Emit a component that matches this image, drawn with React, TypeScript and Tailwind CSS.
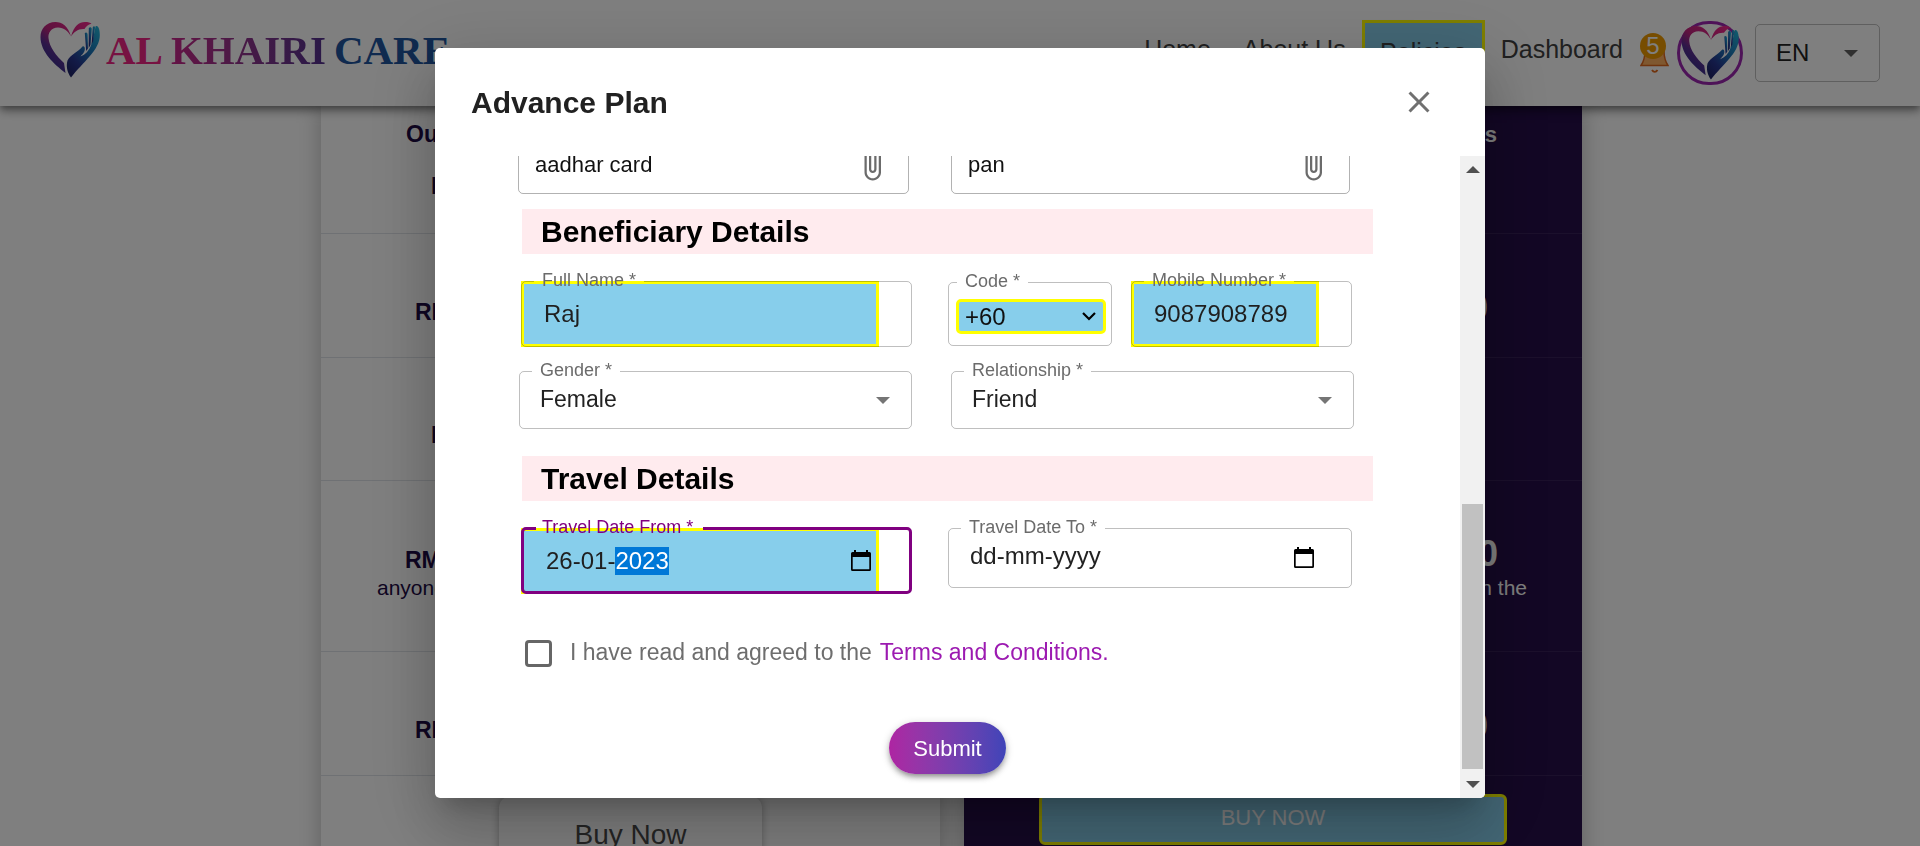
import { useEffect, useRef, type ReactNode } from "react";

function HeartLogo({ id, className }: { id: string; className: string }) {
  return (
    <svg viewBox="0 0 60 56" className={className} aria-hidden="true">
      <defs>
        <linearGradient id={`${id}-heart`} x1="0.9" y1="0" x2="0.15" y2="0.9">
          <stop offset="0" stopColor="#f0288c" />
          <stop offset="0.5" stopColor="#c0247e" />
          <stop offset="0.72" stopColor="#5a2f92" />
          <stop offset="1" stopColor="#2f2f8c" />
        </linearGradient>
        <linearGradient id={`${id}-hand`} x1="0.9" y1="0" x2="0.2" y2="1">
          <stop offset="0" stopColor="#22b2d8" />
          <stop offset="0.45" stopColor="#1b6fb4" />
          <stop offset="0.75" stopColor="#26358f" />
          <stop offset="1" stopColor="#1f2468" />
        </linearGradient>
      </defs>
      <path
        fill={`url(#${id}-heart)`}
        d="M31 14.500C34 4 39 0 45 0c3 0 5.500.700 6.500 1.700C48 2.500 46 4.500 44.500 7 38 6.500 34 10 31 14.500 28 9 24 5.500 18 5.500 11 5.500 8 11 8.500 16c.700 9 8 18 15.500 25l1.500 10C14 42 .500 30 .500 15 .500 7 6 0 15.500 0 22 0 28 4 31 14.500z"
      />
      <g fill={`url(#${id}-hand)`}>
        <path d="M31 55.500C27 50 26 44 27.500 38.500 31 32 37 31 42.500 24.500 44.500 23.500 45.500 26 44.500 29c-1 2.500-3 4-4 5.500 5-2 8.500-6 10.500-11 2-6 3.500-13 4.500-19C57.500 3 59.800 6 59.800 13 60 28 43 40 31 55.500z" />
        <path d="M44.800 11c1.200-1.200 2.800-.500 2.800 1.500l.400 14-1.800 2.500z" />
        <path d="M48.800 6c1-1.500 3-1 3 1L50.500 23l-1.800 3z" />
        <path d="M52.800 5c.800-1.400 2.400-1 2.200 1l-1.800 13-1.600 3z" />
      </g>
    </svg>
  );
}

function Arrow({ className }: { className: string }) {
  return (
    <svg viewBox="0 0 14 7" className={`pointer-events-none h-[7px] w-[14px] ${className}`} aria-hidden="true">
      <path d="M0 0h14L7 7z" fill="currentColor" />
    </svg>
  );
}

function Clip() {
  return (
    <svg viewBox="0 0 24 24" className="size-9 fill-[#6b6b6b]" aria-hidden="true">
      <path d="M16.500 6v11.500c0 2.210-1.790 4-4 4s-4-1.790-4-4V5c0-1.380 1.120-2.500 2.500-2.500s2.500 1.120 2.500 2.500v10.500c0 .550-.450 1-1 1s-1-.450-1-1V6H10v9.500c0 1.380 1.120 2.500 2.500 2.500s2.500-1.120 2.500-2.500V5c0-2.210-1.790-4-4-4S7 2.790 7 5v12.500c0 3.040 2.460 5.500 5.500 5.500s5.500-2.460 5.500-5.500V6h-1.500z" />
    </svg>
  );
}

function Calendar() {
  return (
    <svg viewBox="0 0 20 21" className="h-[21px] w-5" aria-hidden="true">
      <path d="M3 0h2v2h10V0h2v2h1.500A1.500 1.500 0 0 1 20 3.500v16a1.500 1.500 0 0 1-1.500 1.500h-17A1.500 1.500 0 0 1 0 19.500v-16A1.500 1.500 0 0 1 1.500 2H3zM1.700 7v12.300h16.600V7z" fillRule="evenodd" />
    </svg>
  );
}

type FieldProps = {
  id: string;
  label: string;
  height: string;
  labelLeft?: string;
  active?: boolean;
  children: ReactNode;
};

function Field({ id, label, height, labelLeft = "pl-3", active, children }: FieldProps) {
  return (
    <div className={`relative flex items-center ${height}`}>
      {children}
      <fieldset
        aria-hidden="true"
        className={`pointer-events-none absolute inset-x-0 -top-[9px] bottom-0 rounded-[5px] ${labelLeft} ${
          active ? "border-3 border-[#800080]" : "border border-black/25"
        }`}
      >
        <legend className="invisible h-[18px] px-2 text-lg leading-[18px]">{label}</legend>
      </fieldset>
      <label
        htmlFor={id}
        className={`absolute -top-2.5 left-px text-lg leading-[18px] whitespace-nowrap ${labelLeft} ${active ? "text-[#800080]" : "text-[#6b6b6b]"}`}
      >
        <span className="pl-2">{label}</span>
      </label>
    </div>
  );
}

const highlighted = "h-full min-w-0 flex-1 border-3 border-[#ffff00] bg-[#87ceeb] text-2xl text-[#1f1f1f] outline-none";

function SectionTitle({ children }: { children: ReactNode }) {
  return (
    <h3 className="mr-[87px] ml-[87px] flex h-[45px] items-center bg-[#ffebee] pl-[19px] text-[30px] leading-9 font-bold text-black">
      {children}
    </h3>
  );
}

function PlanForm() {
  const dateFrom = useRef<HTMLInputElement>(null);
  useEffect(() => {
    dateFrom.current?.focus({ preventScroll: true });
    dateFrom.current?.setSelectionRange(6, 10);
  }, []);

  return (
    <form className="flex shrink-0 flex-col pb-6" onSubmit={(e) => e.preventDefault()}>
      <div className="mb-[15px] grid grid-cols-[minmax(0,391fr)_minmax(0,399fr)] gap-[42px] pr-[110px] pl-[83px]">
        {["aadhar card", "pan"].map((name) => (
          <div key={name} className="flex h-[60px] items-center rounded-[5px] border border-black/30 pr-[18px] pl-4">
            <input aria-label="Document name" defaultValue={name} className="min-w-0 flex-1 text-[22px] text-[#111] outline-none" />
            <button type="button" aria-label="Attach file">
              <Clip />
            </button>
          </div>
        ))}
      </div>

      <SectionTitle>Beneficiary Details</SectionTitle>

      <div className="mt-[27px] grid grid-cols-[minmax(0,391fr)_minmax(0,404fr)] gap-9 pr-[108px] pl-[86px]">
        <Field id="name" label="Full Name *" height="h-[66px] pr-[33px]">
          <input id="name" defaultValue="Raj" className={`${highlighted} pl-5`} />
        </Field>
        <div className="grid grid-cols-[minmax(0,164fr)_minmax(0,221fr)] items-center gap-[19px]">
          <Field id="code" label="Code *" height="h-16 pt-1 pr-1.5 pl-2" labelLeft="pl-2">
            <select
              id="code"
              className="h-[35px] w-full appearance-none rounded-[5px] border-3 border-[#ffff00] bg-[#87ceeb] pl-1.5 text-2xl leading-[29px] text-[#111] outline-none"
            >
              <option>+60</option>
            </select>
            <svg viewBox="0 0 14 9" className="pointer-events-none absolute top-[30px] right-4 h-[9px] w-3.5" aria-hidden="true">
              <path d="M1 1l6 6 6-6" fill="none" stroke="#000" strokeWidth="2.2" />
            </svg>
          </Field>
          <Field id="mobile" label="Mobile Number *" height="h-[66px] pr-[33px]">
            <input id="mobile" defaultValue="9087908789" className={`${highlighted} pl-5`} />
          </Field>
        </div>
      </div>

      <div className="mt-6 grid grid-cols-[minmax(0,393fr)_minmax(0,403fr)] gap-[39px] pr-[106px] pl-[84px]">
        {[
          { id: "gender", label: "Gender *", value: "Female" },
          { id: "relationship", label: "Relationship *", value: "Friend" },
        ].map((f) => (
          <Field key={f.id} id={f.id} label={f.label} height="h-[58px]">
            <select id={f.id} className="h-full w-full appearance-none bg-transparent pb-0.5 pl-[21px] text-[23px] text-[#222] outline-none">
              <option>{f.value}</option>
            </select>
            <Arrow className="absolute top-[26px] right-[22px] text-[#757575]" />
          </Field>
        ))}
      </div>

      <div className="mt-[27px]">
        <SectionTitle>Travel Details</SectionTitle>
      </div>

      <div className="mt-[27px] grid grid-cols-[minmax(0,391fr)_minmax(0,404fr)] items-start gap-9 pr-[108px] pl-[86px]">
        <Field id="from" label="Travel Date From *" height="h-[66px] pr-[33px]" active>
          <input
            id="from"
            ref={dateFrom}
            defaultValue="26-01-2023"
            className={`${highlighted} pl-[22px] selection:bg-[#0078d7] selection:text-white`}
          />
          <button type="button" aria-label="Open calendar" className="absolute top-[22px] right-[41px]">
            <Calendar />
          </button>
        </Field>
        <Field id="to" label="Travel Date To *" height="h-[60px]">
          <input id="to" placeholder="dd-mm-yyyy" className="h-full w-full pb-1 pl-[22px] text-2xl outline-none placeholder:text-[#222]" />
          <button type="button" aria-label="Open calendar" className="absolute top-[19px] right-[38px]">
            <Calendar />
          </button>
        </Field>
      </div>

      <div className="mt-[46px] flex h-[27px] items-center pl-[90px] text-[23px] text-[#6e6e6e]">
        <input id="terms" type="checkbox" className="size-[27px] appearance-none rounded-[4px] border-3 border-[#666]" />
        <label htmlFor="terms" className="ml-[18px] pb-0.5">
          I have read and agreed to the
        </label>
        <a href="#terms" className="ml-2 pb-0.5 text-[#9c1ab1]">
          Terms and Conditions.
        </a>
      </div>

      <button
        type="submit"
        className="mt-[55px] ml-[454px] flex h-[52px] w-[117px] items-center justify-center rounded-full bg-linear-to-r from-[#ae24a2] to-[#3f44b8] text-[22px] text-white shadow-[0_4px_6px_-2px_rgba(0,0,0,0.4),0_2px_8px_rgba(0,0,0,0.2)]"
      >
        Submit
      </button>
    </form>
  );
}

function ScrollTrack() {
  return (
    <div className="flex w-[25px] shrink-0 flex-col items-center bg-[#f1f1f1] py-2.5 text-[#505050]" aria-hidden="true">
      <Arrow className="w-[11px] rotate-180" />
      <div className="mt-2.5 grow-[322]" />
      <div className="mb-3 w-[21px] grow-[265] bg-[#c1c1c1]" />
      <Arrow className="w-[11px]" />
    </div>
  );
}

function Header() {
  return (
    <header className="relative z-10 flex h-[106px] shrink-0 items-center bg-white pr-10 pl-10 shadow-[0_3px_6px_-1px_rgba(0,0,0,0.3),0_6px_8px_rgba(0,0,0,0.2),0_1px_15px_rgba(0,0,0,0.2)]">
      <a href="#home" className="flex items-center gap-1.5 pb-1.5 font-['Liberation_Serif',serif] text-[41px] leading-[52px] font-bold">
        <HeartLogo id="brand" className="h-14 w-[60px]" />
        <span className="flex gap-2">
          <span className="text-[#ee2484]">AL</span>
          <span className="bg-linear-to-r from-[#c8248a] to-[#52308e] bg-clip-text text-transparent">KHAIRI</span>
          <span className="text-[#20559e]">CARE</span>
        </span>
      </a>
      <nav className="ml-auto flex items-center text-[25px] text-[#404040]">
        <a href="#home" className="mr-8 pb-1.5">Home</a>
        <a href="#about" className="mr-4 pb-1.5">About Us</a>
        <a href="#policies" className="flex h-[66px] w-[123px] items-center justify-center border-3 border-[#ffff00] bg-[#87ceeb]">
          Policies
        </a>
        <a href="#dashboard" className="ml-4 pb-1.5">Dashboard</a>
      </nav>
      <button type="button" aria-label="Notifications" className="relative ml-[17px] h-10 w-[29px]">
        <svg viewBox="0 0 29 40" className="absolute inset-0 h-10 w-[29px]" aria-hidden="true">
          <path d="M1 32.500C4 28 5 25 5 18c0-6 4-10 9.500-10S24 12 24 18c0 7 1 10 4 14.500z" fill="#ffb060" stroke="#e0691c" strokeWidth="1.500" />
          <path d="M12 37c1.500 2.500 4 2.500 5.500 0" fill="none" stroke="#e0691c" strokeWidth="1.800" />
        </svg>
        <span className="absolute top-0 left-0 flex size-[26px] items-center justify-center rounded-full bg-[#ee9a00] text-2xl leading-6 text-white">
          5
        </span>
      </button>
      <a href="#profile" aria-label="Profile" className="ml-2 flex h-16 w-[66px] items-center justify-center rounded-full border-3 border-[#9c27b0]">
        <HeartLogo id="avatar" className="h-[54px] w-[58px]" />
      </a>
      <div className="relative ml-3 flex h-[58px] w-[125px] items-center">
        <select aria-label="Language" className="h-full w-full appearance-none rounded-[5px] border border-black/25 bg-transparent pl-5 text-2xl text-[#222]">
          <option>EN</option>
        </select>
        <Arrow className="absolute right-[22px] text-[#606060]" />
      </div>
    </header>
  );
}

const lightRows = [
  { row: "h-[128px] gap-[24px] pt-3.5", lines: [{ t: "Our Plans", c: "pl-[85px]" }, { t: "RM", c: "pl-[110px]" }] },
  { row: "h-[124px] justify-center pt-8", lines: [{ t: "RM 100", c: "pl-[94px]" }] },
  { row: "h-[123px] justify-center pt-8", lines: [{ t: "RM", c: "pl-[110px]" }] },
  { row: "h-[171px] justify-center pt-4", lines: [{ t: "RM 1000", c: "pl-[84px]" }, { t: "anyone", c: "pl-[56px] text-[21px] font-normal" }] },
  { row: "h-[124px] justify-center pt-8", lines: [{ t: "RM 100", c: "pl-[94px]" }] },
];

const darkRows = [
  { row: "h-[128px] pt-3", lines: [{ t: "Benefits", c: "pr-[85px] text-[22px]" }] },
  { row: "h-[124px] justify-center pt-6", lines: [{ t: "100", c: "pr-[94px] text-4xl" }] },
  { row: "h-[123px]", lines: [] },
  { row: "h-[171px] justify-center pt-2", lines: [{ t: "1000", c: "pr-[84px] text-4xl leading-9" }, { t: "on the", c: "pr-[55px] text-[21px] leading-8 font-normal" }] },
  { row: "h-[124px] justify-center pt-6", lines: [{ t: "100", c: "pr-[94px] text-4xl" }] },
];

function Plans() {
  return (
    <main className="flex flex-1 justify-center pr-[17px]">
      <div className="grid w-full max-w-[1261px] grid-cols-[619fr_618fr] gap-6">
        <section className="bg-white text-[23px] font-bold text-[#1d0a45] shadow-[0_0_22px_rgba(0,0,0,0.25)]">
          {lightRows.map((r, i) => (
            <div key={i} className={`flex flex-col border-b border-[#dfe3e8] ${r.row}`}>
              {r.lines.map((l) => (
                <p key={l.t} className={`leading-7 ${l.c}`}>{l.t}</p>
              ))}
            </div>
          ))}
          <button type="button" className="mx-auto mt-5 flex h-[86px] w-[263px] items-center justify-center rounded-[12px] pb-2 text-[28px] font-normal text-[#4a4a4a] shadow-[0_0_8px_rgba(0,0,0,0.3)]">
            Buy Now
          </button>
        </section>
        <section className="bg-[#260e4a] text-right font-bold text-white shadow-[0_0_22px_rgba(0,0,0,0.25)]">
          {darkRows.map((r, i) => (
            <div key={i} className={`flex flex-col border-b border-white/8 ${r.row}`}>
              {r.lines.map((l) => (
                <p key={l.t} className={l.c}>{l.t}</p>
              ))}
            </div>
          ))}
          <button type="button" className="mx-auto mt-[18px] flex h-[51px] w-[468px] items-center justify-center rounded-[6px] border-3 border-[#ffff00] bg-[#87ceeb] pb-1 text-[22px] font-normal text-white">
            BUY NOW
          </button>
        </section>
      </div>
    </main>
  );
}

export default function App() {
  return (
    <div className="relative h-screen overflow-hidden bg-white font-['Liberation_Sans',Arial,sans-serif]">
      <div className="flex h-full flex-col overflow-hidden">
        <Header />
        <Plans />
      </div>
      <div className="fixed inset-0 z-20 flex justify-center bg-black/50 py-12">
        <div
          role="dialog"
          aria-labelledby="plan-title"
          className="flex w-full max-w-[1050px] flex-col overflow-hidden rounded-[5px] bg-white shadow-[0_16px_22px_-10px_rgba(0,0,0,0.2),0_36px_57px_4px_rgba(0,0,0,0.14),0_13px_69px_12px_rgba(0,0,0,0.12)]"
        >
          <div className="flex h-[108px] shrink-0 items-center justify-between pr-12 pl-9">
            <h2 id="plan-title" className="text-[30px] font-bold text-[#212121]">Advance Plan</h2>
            <button type="button" aria-label="Close">
              <svg viewBox="0 0 24 24" className="size-9 fill-[#707070]" aria-hidden="true">
                <path d="M19 6.410 17.590 5 12 10.590 6.410 5 5 6.410 10.590 12 5 17.590 6.410 19 12 13.410 17.590 19 19 17.590 13.410 12z" />
              </svg>
            </button>
          </div>
          <div className="flex min-h-0 flex-1">
            <div className="flex min-w-0 flex-1 flex-col justify-end overflow-hidden">
              <PlanForm />
            </div>
            <ScrollTrack />
          </div>
        </div>
      </div>
    </div>
  );
}
